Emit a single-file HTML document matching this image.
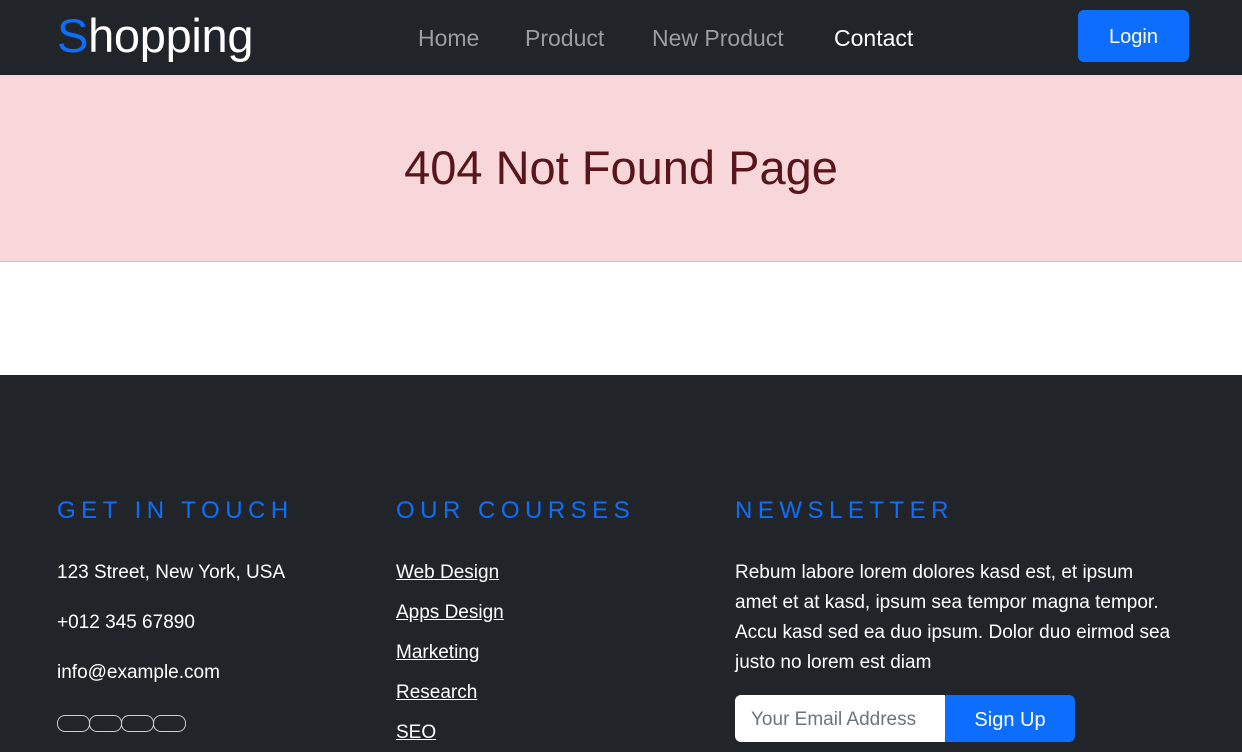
<!DOCTYPE html>
<html><head><style>
*{box-sizing:border-box;margin:0;padding:0}
body{width:1242px;height:752px;overflow:hidden;font-family:"Liberation Sans",sans-serif;background:#fff;position:relative}
.nav{position:absolute;left:0;top:0;width:1242px;height:75px;background:#212529}
.logo{position:absolute;left:57px;top:8px;font-size:47px;color:#fff;font-weight:500;letter-spacing:-0.3px}
.logo span{color:#0d6efd}
.links a{position:absolute;top:25px;font-size:23px;color:#9a9da1;text-decoration:none}
.login{position:absolute;left:1078px;top:10px;width:111px;height:52px;background:#0d6efd;border-radius:6px;color:#fff;font-size:20px;text-align:center;line-height:54px}
.alert{position:absolute;left:0;top:75px;width:1242px;height:187px;background:#f8d7da;border-bottom:1px solid #e9b9be}
.alert h1{position:absolute;width:100%;top:65px;text-align:center;font-size:47px;font-weight:500;color:#58151c}
.foot{position:absolute;left:0;top:375px;width:1242px;height:377px;background:#212529;color:#fff}
.h{position:absolute;top:122px;font-size:24px;letter-spacing:5.5px;color:#0d6efd;font-weight:500}
.t{position:absolute;font-size:19px;color:#fff}
.t.u{text-decoration:underline}
.p{position:absolute;left:735px;top:183px;width:445px;font-size:19px;line-height:30px}
.soc{position:absolute;top:340px;width:33px;height:17px;border:1.5px solid #ccc;border-radius:8px}
.inp{position:absolute;left:735px;top:320px;width:210px;height:47px;background:#fff;border-radius:6px 0 0 6px;color:#6c757d;font-size:19px;padding:14px 16px}
.btn{position:absolute;left:945px;top:320px;width:130px;height:47px;background:#0d6efd;border-radius:0 6px 6px 0;font-size:20px;text-align:center;line-height:50px}
</style></head><body>
<div class="nav">
<div class="logo"><span>S</span>hopping</div>
<div class="links"><a style="left:418px">Home</a><a style="left:525px">Product</a><a style="left:652px">New Product</a><a style="left:834px;color:#fff">Contact</a></div>
<div class="login">Login</div>
</div>
<div class="alert"><h1>404 Not Found Page</h1></div>
<div class="foot">
<div class="h" style="left:57px">GET IN TOUCH</div>
<div class="h" style="left:396px">OUR COURSES</div>
<div class="h" style="left:735px">NEWSLETTER</div>
<div class="t" style="left:57px;top:187px">123 Street, New York, USA</div>
<div class="t" style="left:57px;top:237px">+012 345 67890</div>
<div class="t" style="left:57px;top:287px">info@example.com</div>
<div class="soc" style="left:57px"></div><div class="soc" style="left:89px"></div><div class="soc" style="left:121px"></div><div class="soc" style="left:153px"></div>
<div class="t u" style="left:396px;top:187px">Web Design</div>
<div class="t u" style="left:396px;top:227px">Apps Design</div>
<div class="t u" style="left:396px;top:267px">Marketing</div>
<div class="t u" style="left:396px;top:307px">Research</div>
<div class="t u" style="left:396px;top:347px">SEO</div>
<div class="p">Rebum labore lorem dolores kasd est, et ipsum amet et at kasd, ipsum sea tempor magna tempor. Accu kasd sed ea duo ipsum. Dolor duo eirmod sea justo no lorem est diam</div>
<div class="inp">Your Email Address</div>
<div class="btn">Sign Up</div>
</div>
</body></html>
